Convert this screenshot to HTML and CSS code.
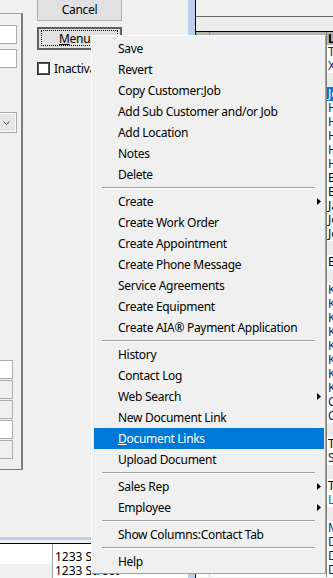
FILE: index.html
```html
<!DOCTYPE html>
<html lang="en">
<head>
  <meta charset="UTF-8" />
  <title>Customer - Menu</title>
  <meta name="viewport" content="width=device-width, initial-scale=1.0">
  <link rel="stylesheet" href="styles.css">
</head>
<body>
  <div class="screen">
    <!-- Left side: customer form -->
    <div class="left">
      <div class="form-area">
        <div class="group">
          <div class="field"></div>
          <div class="field"></div>
          <div class="combo">
            <svg width="7" height="4" viewBox="0 0 7 4"><path d="M0.5 0.5 L3.5 3.5 L6.5 0.5" fill="none" stroke="#3c3c3c" stroke-width="1"/></svg>
          </div>
          <div class="low-fields">
            <div class="small white"></div>
            <div class="small"></div>
            <div class="small"></div>
            <div class="small white"></div>
            <div class="small"></div>
          </div>
        </div>
        <div class="actions">
          <button class="btn cancel">Cancel</button>
          <button class="btn menu-btn"><span class="focus"><span><u>M</u>enu</span><span class="caret">&#9662;</span></span></button>
          <label class="check"><span class="box"></span>Inactivate</label>
        </div>
      </div>
      <div class="addr-grid">
        <div class="grid-row first"><span class="c1"></span><span class="c2">1233 Street</span></div>
        <div class="grid-row second"><span class="c1"></span><span class="c2">1233 Street</span></div>
      </div>
    </div>

    <div class="splitter"></div>

    <!-- Right side: contact list -->
    <div class="right">
      <div class="toolbar"></div>
      <div class="tabstrip"></div>
      <div class="list">
        <div class="row head"><span class="a"></span><span class="b"></span><span class="c">Last</span></div>
        <div class="row"><span class="a"></span><span class="b"></span><span class="c n">Taylor</span></div>
        <div class="row"><span class="a"></span><span class="b"></span><span class="c n">Xu</span></div>
        <div class="row blank"><span class="a"></span><span class="b"></span><span class="c"></span></div>
        <div class="row sel"><span class="a"></span><span class="b"></span><span class="c">Jones</span></div>
        <div class="row"><span class="a"></span><span class="b"></span><span class="c n">Hall</span></div>
        <div class="row"><span class="a"></span><span class="b"></span><span class="c n">Hayes</span></div>
        <div class="row"><span class="a"></span><span class="b"></span><span class="c n">Hill</span></div>
        <div class="row"><span class="a"></span><span class="b"></span><span class="c n">Hunt</span></div>
        <div class="row"><span class="a"></span><span class="b"></span><span class="c n">Hyde</span></div>
        <div class="row"><span class="a"></span><span class="b"></span><span class="c">Baker</span></div>
        <div class="row"><span class="a"></span><span class="b"></span><span class="c">Bell</span></div>
        <div class="row"><span class="a"></span><span class="b"></span><span class="c">James</span></div>
        <div class="row"><span class="a"></span><span class="b"></span><span class="c">Jordan</span></div>
        <div class="row"><span class="a"></span><span class="b"></span><span class="c">Joyce</span></div>
        <div class="row blank"><span class="a"></span><span class="b"></span><span class="c"></span></div>
        <div class="row"><span class="a"></span><span class="b"></span><span class="c">Brown</span></div>
        <div class="row blank"><span class="a"></span><span class="b"></span><span class="c"></span></div>
        <div class="row"><span class="a"></span><span class="b"></span><span class="c n">Kane</span></div>
        <div class="row"><span class="a"></span><span class="b"></span><span class="c n">Kelly</span></div>
        <div class="row"><span class="a"></span><span class="b"></span><span class="c n">Kent</span></div>
        <div class="row"><span class="a"></span><span class="b"></span><span class="c n">Kerr</span></div>
        <div class="row"><span class="a"></span><span class="b"></span><span class="c n">King</span></div>
        <div class="row"><span class="a"></span><span class="b"></span><span class="c n">Knox</span></div>
        <div class="row"><span class="a"></span><span class="b"></span><span class="c n">Koch</span></div>
        <div class="row"><span class="a"></span><span class="b"></span><span class="c n">Kyle</span></div>
        <div class="row"><span class="a"></span><span class="b"></span><span class="c n">Cole</span></div>
        <div class="row"><span class="a"></span><span class="b"></span><span class="c n">Cruz</span></div>
        <div class="row blank"><span class="a"></span><span class="b"></span><span class="c"></span></div>
        <div class="row"><span class="a"></span><span class="b"></span><span class="c">Tate</span></div>
        <div class="row"><span class="a"></span><span class="b"></span><span class="c n">Stone</span></div>
        <div class="row blank"><span class="a"></span><span class="b"></span><span class="c"></span></div>
        <div class="row"><span class="a"></span><span class="b"></span><span class="c">Todd</span></div>
        <div class="row"><span class="a"></span><span class="b"></span><span class="c blue">Lane</span></div>
        <div class="row blank"><span class="a"></span><span class="b"></span><span class="c"></span></div>
        <div class="row"><span class="a"></span><span class="b"></span><span class="c n">Moore</span></div>
        <div class="row"><span class="a"></span><span class="b"></span><span class="c n">Dean</span></div>
        <div class="row"><span class="a"></span><span class="b"></span><span class="c n">Diaz</span></div>
        <div class="row"><span class="a"></span><span class="b"></span><span class="c n">Dunn</span></div>
      </div>
    </div>
  </div>

  <!-- Context menu opened from the Menu button -->
  <ul class="popup">
    <li class="item">Save</li>
    <li class="item">Revert</li>
    <li class="item">Copy Customer:Job</li>
    <li class="item">Add Sub Customer and/or Job</li>
    <li class="item">Add Location</li>
    <li class="item">Notes</li>
    <li class="item">Delete</li>
    <li class="sep"></li>
    <li class="item">Create<svg class="arrow" width="4" height="7" viewBox="0 0 4 7"><path d="M0 0 L4 3.5 L0 7 Z"/></svg></li>
    <li class="item">Create Work Order</li>
    <li class="item">Create Appointment</li>
    <li class="item">Create Phone Message</li>
    <li class="item">Service Agreements</li>
    <li class="item">Create Equipment</li>
    <li class="item">Create AIA&reg; Payment Application</li>
    <li class="sep"></li>
    <li class="item">History</li>
    <li class="item">Contact Log</li>
    <li class="item">Web Search<svg class="arrow" width="4" height="7" viewBox="0 0 4 7"><path d="M0 0 L4 3.5 L0 7 Z"/></svg></li>
    <li class="item">New Document Link</li>
    <li class="item active"><span><u>D</u>ocument Links</span></li>
    <li class="item">Upload Document</li>
    <li class="sep"></li>
    <li class="item">Sales Rep<svg class="arrow" width="4" height="7" viewBox="0 0 4 7"><path d="M0 0 L4 3.5 L0 7 Z"/></svg></li>
    <li class="item">Employee<svg class="arrow" width="4" height="7" viewBox="0 0 4 7"><path d="M0 0 L4 3.5 L0 7 Z"/></svg></li>
    <li class="sep"></li>
    <li class="item">Show Columns:Contact Tab</li>
    <li class="sep"></li>
    <li class="item">Help</li>
  </ul>
</body>
</html>
```

FILE: styles.css
```css
body {
  margin: 0;
  background-color: #f0f0f0;
  font-family: "Noto Sans", "Segoe UI", sans-serif;
  font-size: 12px;
  color: #000;
}

.screen {
  display: flex;
  width: 333px;
  height: 578px;
  overflow: hidden;
}

/* Left form */
.left {
  width: 188px;
  flex-shrink: 0;
  display: flex;
  flex-direction: column;
}

.form-area {
  height: 537px;
  display: flex;
  align-items: flex-start;
}

.group {
  box-sizing: border-box;
  width: 23px;
  height: 457px;
  margin-top: 13px;
  border-top: 1px solid #a0a0a0;
  border-right: 2px solid #7d7d7d;
  border-bottom: 1px solid #7d7d7d;
}

.field {
  box-sizing: border-box;
  width: 17px;
  height: 19px;
  margin-top: 5px;
  border: 1px solid #acacac;
  border-left: none;
  background: #fff;
}

.field:first-child {
  margin-top: 11px;
}

.combo {
  box-sizing: border-box;
  width: 17px;
  height: 21px;
  margin-top: 44px;
  padding-left: 3px;
  border: 1px solid #a8a8a8;
  border-left: none;
  background: #e6e6e6;
  box-shadow: inset 0 1px 0 #fafafa, inset -1px -1px 0 #fafafa;
  display: flex;
  align-items: center;
}

.low-fields {
  margin-top: 227px;
}

.small {
  box-sizing: border-box;
  width: 13px;
  height: 19px;
  margin-bottom: 1px;
  border: 1px solid #acacac;
  border-left: none;
  background: #f0f0f0;
}

.small.white {
  background: #fff;
}

.actions {
  margin-left: 14px;
  width: 85px;
  display: flex;
  flex-direction: column;
}

.btn {
  box-sizing: border-box;
  width: 85px;
  padding: 0;
  font: inherit;
  color: #000;
  background: #e1e1e1;
  border: 1px solid #adadad;
}

.cancel {
  height: 24px;
  margin-top: -3px;
  letter-spacing: -0.3px;
}

.menu-btn {
  height: 23px;
  margin-top: 6px;
  border: 2px solid #5f5f5f;
  display: flex;
}

.focus {
  box-sizing: border-box;
  flex: 1;
  margin: 1px 2px 2px;
  border: 1px dotted #000;
  display: flex;
  align-items: center;
  justify-content: center;
  gap: 5px;
  letter-spacing: -0.3px;
}

.caret {
  font-size: 9px;
}

.check {
  margin-top: 12px;
  height: 13px;
  display: flex;
  align-items: center;
  white-space: nowrap;
  letter-spacing: -0.3px;
}

.box {
  box-sizing: border-box;
  width: 13px;
  height: 13px;
  margin-right: 4px;
  border: 1px solid #333;
  box-shadow: inset 0 0 0 1px #555;
  background: #fff;
  flex-shrink: 0;
}

/* Address grid at the bottom left */
.addr-grid {
  height: 41px;
  box-sizing: border-box;
  border-top: 3px solid #b9d1ea;
  padding-top: 3px;
}

.addr-grid .grid-row:first-child {
  border-top: 1px solid #000;
}

.grid-row {
  display: flex;
}

.grid-row .c1 {
  width: 52px;
  border-right: 1px solid #a0a0a0;
  background: #fff;
}

.grid-row .c2 {
  flex: 1;
  padding-left: 2px;
  line-height: 14px;
  background: #fff;
  white-space: nowrap;
}

.grid-row.first {
  height: 20px;
}

.grid-row.first .c2 {
  padding-top: 6px;
}

.grid-row.second {
  height: 14px;
}

.grid-row.second .c1 {
  background: #f0f0f0;
}

.splitter {
  width: 7px;
  flex-shrink: 0;
  background: #b9d1ea;
  border-right: 1px solid #000;
}

/* Right list */
.right {
  flex: 1;
  display: flex;
  flex-direction: column;
}

.toolbar {
  height: 16px;
  border-bottom: 1px solid #6b6b6b;
}

.tabstrip {
  height: 14px;
  background: #ebebeb;
}

.list {
  border-top: 1px solid #000;
  background: #fff;
}

.row {
  display: flex;
  height: 14px;
  line-height: 14px;
}

.row .a {
  width: 13px;
}

.row .b {
  box-sizing: border-box;
  width: 117px;
  border-left: 1px solid #d0d0d0;
}

.row .c {
  flex: 1;
  border-left: 1px solid #808080;
  padding-left: 1px;
  white-space: nowrap;
  overflow: hidden;
}

.row.head {
  height: 13px;
  line-height: 13px;
  background: #b4b4ae;
  font-weight: bold;
}

.row.head .b {
  border-left-color: #8a8a86;
}

.row.blank {
  background: #ececec;
}

.row.sel {
  background: #0078d7;
  color: #fff;
}

.c.n {
  color: #1a1a66;
}

.c.blue {
  color: #0063c6;
}

/* Popup menu */
.popup {
  position: absolute;
  left: 91px;
  top: 35px;
  width: 235px;
  box-sizing: border-box;
  margin: 0;
  padding: 2px 1px 1px 2px;
  list-style: none;
  background: #f0f0f0;
  border: 1px solid #a0a0a0;
  border-top-color: #fcfcfc;
  border-left-color: #fcfcfc;
}

.item {
  height: 21px;
  display: flex;
  align-items: center;
  padding-left: 24px;
  white-space: nowrap;
  letter-spacing: -0.3px;
}

.item .arrow {
  margin-left: auto;
  margin-right: 3px;
}

.item.active {
  background: #0078d7;
  color: #fff;
}

.sep {
  height: 1px;
  margin: 2px 9px 2px 8px;
  background: #a0a0a0;
  border-bottom: 1px solid #fff;
}
```
